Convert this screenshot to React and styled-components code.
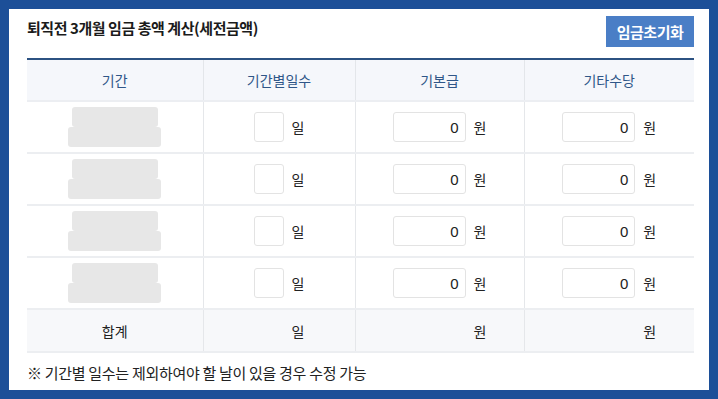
import styled, { createGlobalStyle } from "styled-components";

const GlobalStyle = createGlobalStyle`
    html, body {
        margin: 0;
        padding: 0;
        background: #1c4f98;
    }
    body {
        font-family: "Noto Sans CJK KR", "Noto Sans", sans-serif;
        color: #222;
    }
`;

const ROWS = [0, 1, 2, 3];

const App = () => {
    return (
        <>
            <GlobalStyle />
            <Page>
                <Card>
                    <TopBar>
                        <Title>퇴직전 3개월 임금 총액 계산(세전금액)</Title>
                        <ResetButton>임금초기화</ResetButton>
                    </TopBar>
                    <Table>
                        <colgroup>
                            <col style={{ width: 176 }} />
                            <col style={{ width: 152 }} />
                            <col style={{ width: 169 }} />
                            <col style={{ width: 170 }} />
                        </colgroup>
                        <thead>
                            <tr>
                                <Th>기간</Th>
                                <Th>기간별일수</Th>
                                <Th>기본급</Th>
                                <Th>기타수당</Th>
                            </tr>
                        </thead>
                        <tbody>
                            {ROWS.map((r) => (
                                <tr key={r}>
                                    <Td>
                                        <DateStack>
                                            <DateBox $w={86} />
                                            <DateBox $w={93} />
                                        </DateStack>
                                    </Td>
                                    <Td>
                                        <Field>
                                            <Input $w={30} />
                                            <Unit>일</Unit>
                                        </Field>
                                    </Td>
                                    <Td>
                                        <Field>
                                            <Input $w={73}>0</Input>
                                            <Unit>원</Unit>
                                        </Field>
                                    </Td>
                                    <Td>
                                        <Field>
                                            <Input $w={73}>0</Input>
                                            <Unit>원</Unit>
                                        </Field>
                                    </Td>
                                </tr>
                            ))}
                        </tbody>
                        <tfoot>
                            <tr>
                                <TotalTd>합계</TotalTd>
                                <TotalTd>
                                    <Field>
                                        <Spacer $w={30} />
                                        <Unit>일</Unit>
                                    </Field>
                                </TotalTd>
                                <TotalTd>
                                    <Field>
                                        <Spacer $w={73} />
                                        <Unit>원</Unit>
                                    </Field>
                                </TotalTd>
                                <TotalTd>
                                    <Field>
                                        <Spacer $w={73} />
                                        <Unit>원</Unit>
                                    </Field>
                                </TotalTd>
                            </tr>
                        </tfoot>
                    </Table>
                    <Note>※ 기간별 일수는 제외하여야 할 날이 있을 경우 수정 가능</Note>
                </Card>
            </Page>
        </>
    );
};

const Page = styled.div`
    padding: 9px;
    width: 718px;
    height: 399px;
    box-sizing: border-box;
`;

const Card = styled.div`
    width: 700px;
    height: 381px;
    box-sizing: border-box;
    background: #fff;
    padding: 7px 15px 0 18px;
    display: flex;
    flex-direction: column;
`;

const TopBar = styled.div`
    display: flex;
    align-items: center;
    justify-content: space-between;
    height: 31px;
    margin-bottom: 11px;
`;

const Title = styled.h2`
    margin: 0;
    font-size: 15px;
    font-weight: 700;
    color: #1b1b1b;
    letter-spacing: -0.45px;
    position: relative;
    top: -4px;
`;

const ResetButton = styled.button`
    width: 88px;
    height: 31px;
    border: 0;
    background: #4a7ec6;
    color: #fff;
    font-family: inherit;
    font-size: 15px;
    font-weight: 700;
    letter-spacing: -0.5px;
    padding: 0;
`;

const Table = styled.table`
    width: 667px;
    border-collapse: collapse;
    table-layout: fixed;
    font-size: 14px;
`;

const Th = styled.th`
    height: 40px;
    padding: 0;
    background: #f5f7fb;
    border-top: 2px solid #2c5282;
    border-bottom: 2px solid #eceef2;
    border-left: 1px solid #e3e6ea;
    color: #2f5688;
    font-weight: 400;
    &:first-child { border-left: 0; }
`;

const Td = styled.td`
    height: 50px;
    padding: 0;
    border-bottom: 2px solid #eceef1;
    border-left: 1px solid #e5e7ea;
    text-align: center;
    &:first-child { border-left: 0; }
`;

const TotalTd = styled.td`
    height: 41px;
    padding: 0;
    background: #f7f8fa;
    border-top: 1px solid #3a6ea8;
    border-bottom: 2px solid #eceef1;
    border-left: 1px solid #e5e7ea;
    text-align: center;
    &:first-child { border-left: 0; }
`;

const DateStack = styled.div`
    display: flex;
    flex-direction: column;
    align-items: center;
`;

const DateBox = styled.div`
    width: ${(p) => p.$w}px;
    height: 20px;
    background: #e7e7e7;
    border-radius: 3px;
`;

const Field = styled.div`
    display: flex;
    align-items: center;
    justify-content: center;
    gap: 8px;
`;

const Input = styled.div`
    width: ${(p) => p.$w}px;
    height: 30px;
    box-sizing: border-box;
    border: 1px solid #e3e3e3;
    border-radius: 3px;
    background: #fff;
    padding-right: 6px;
    display: flex;
    align-items: center;
    justify-content: flex-end;
    font-family: "Liberation Sans", Arial, sans-serif;
    font-size: 15px;
    color: #222;
`;

const Spacer = styled.div`
    width: ${(p) => p.$w}px;
`;

const Unit = styled.span`
    font-size: 14px;
    color: #222;
`;

const Note = styled.p`
    margin: 9px 0 0;
    font-size: 15px;
    color: #222;
    letter-spacing: -0.3px;
`;

export default App;
